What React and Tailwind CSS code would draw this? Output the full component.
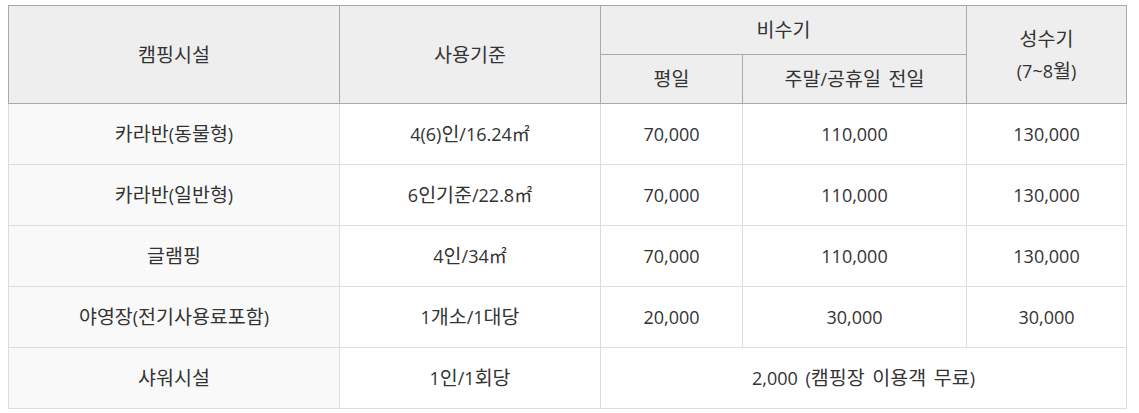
const rows = [
  { name: '카라반(동물형)', basis: '4(6)인/16.24㎡', weekday: '70,000', weekend: '110,000', peak: '130,000' },
  { name: '카라반(일반형)', basis: '6인기준/22.8㎡', weekday: '70,000', weekend: '110,000', peak: '130,000' },
  { name: '글램핑', basis: '4인/34㎡', weekday: '70,000', weekend: '110,000', peak: '130,000' },
  { name: '야영장(전기사용료포함)', basis: '1개소/1대당', weekday: '20,000', weekend: '30,000', peak: '30,000' },
]

// Hangul runs are set a touch larger, as the original font's Hangul are wider than its digits
function T({ children }) {
  const parts = String(children).split(/([가-힣]+)/)
  return parts.map((p, i) =>
    /[가-힣]/.test(p) ? (
      <span key={i} className="text-[19.5px]">{p}</span>
    ) : (
      p
    )
  )
}

export default function App() {
  return (
    <div className="bg-white w-[1139px] h-[413px] pt-[5px] pl-[8px] font-['Open_Sans','Noto_Sans_CJK_KR',sans-serif] text-[18px] text-[#333] [word-spacing:3px]">
      <table className="table-fixed border-collapse w-[1118px] text-center">
        <colgroup>
          <col className="w-[331px]" />
          <col className="w-[261px]" />
          <col className="w-[142px]" />
          <col className="w-[224px]" />
          <col className="w-[160px]" />
        </colgroup>
        <thead>
          <tr className="h-[49px]">
            <th rowSpan={2} className="border border-[#aaa] bg-[#eee] font-normal"><T>캠핑시설</T></th>
            <th rowSpan={2} className="border border-[#aaa] bg-[#eee] font-normal"><T>사용기준</T></th>
            <th colSpan={2} className="border border-[#aaa] bg-[#eee] font-normal"><T>비수기</T></th>
            <th rowSpan={2} className="border border-[#aaa] bg-[#eee] font-normal leading-[32px]">
              <T>성수기</T><br /><T>(7~8월)</T>
            </th>
          </tr>
          <tr className="h-[49px]">
            <th className="border border-[#aaa] bg-[#eee] font-normal"><T>평일</T></th>
            <th className="border border-[#aaa] bg-[#eee] font-normal"><T>주말/공휴일 전일</T></th>
          </tr>
        </thead>
        <tbody>
          {rows.map((r) => (
            <tr key={r.name} className="h-[61px]">
              <td className="border border-[#ddd] bg-[#f9f9f9]"><T>{r.name}</T></td>
              <td className="border border-[#ddd]"><T>{r.basis}</T></td>
              <td className="border border-[#ddd]">{r.weekday}</td>
              <td className="border border-[#ddd]">{r.weekend}</td>
              <td className="border border-[#ddd]">{r.peak}</td>
            </tr>
          ))}
          <tr className="h-[61px]">
            <td className="border border-[#ddd] bg-[#f9f9f9]"><T>샤워시설</T></td>
            <td className="border border-[#ddd]"><T>1인/1회당</T></td>
            <td colSpan={3} className="border border-[#ddd]"><T>2,000 (캠핑장 이용객 무료)</T></td>
          </tr>
        </tbody>
      </table>
    </div>
  )
}
